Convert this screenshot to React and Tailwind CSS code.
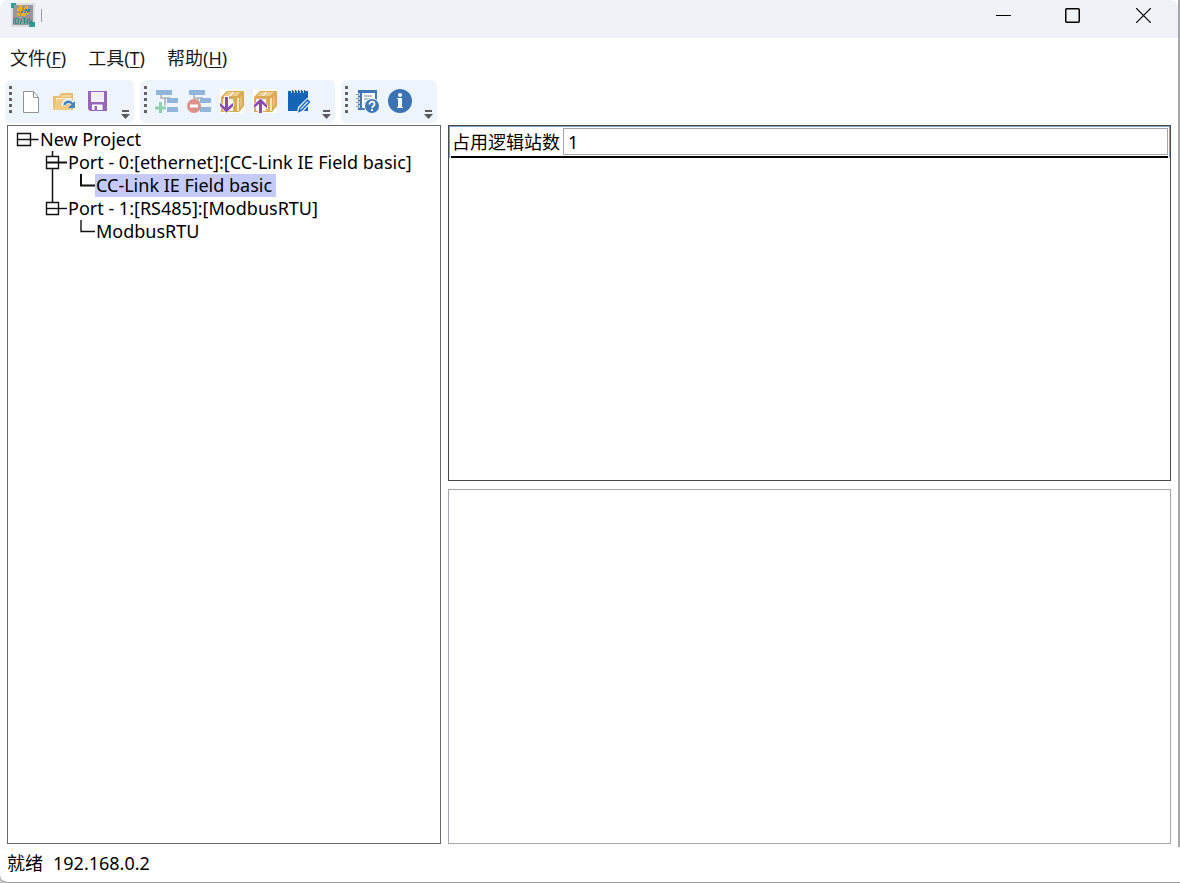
import { useState } from 'react'

const menus = [
  { label: '文件', hotkey: 'F' },
  { label: '工具', hotkey: 'T' },
  { label: '帮助', hotkey: 'H' },
]

const treeRows = [
  { id: 'root', type: 'root', label: 'New Project' },
  { id: 'port0', type: 'firstPort', label: 'Port - 0:[ethernet]:[CC-Link IE Field basic]' },
  { id: 'cclink', type: 'childWithTrunk', label: 'CC-Link IE Field basic' },
  { id: 'port1', type: 'lastPort', label: 'Port - 1:[RS485]:[ModbusRTU]' },
  { id: 'modbus', type: 'child', label: 'ModbusRTU' },
]

function AppLogo() {
  return (
    <svg width="24" height="24" viewBox="0 0 24 24" shapeRendering="crispEdges" aria-hidden="true">
      <path d="M0 0h24v24H0z" fill="#dcdfe1" />
      <path d="M2 2h20v20H2z" fill="#979899" />
      <path d="M0 0h5v2H3v3H0zM19 19h5v5h-6v-2h1z" fill="#2f9d91" />
      <path
        d="M8 2h3v3H8zM14 3h3v3h-3zM6 5h4v3H6zM9 5h6v3H9zM9 8h5v3H9zM6 10h3v3H6zM10 10h5v3h-5zM14 9h4v2h-4z"
        fill="#f5b01c"
      />
      <path d="M11 5h2v2h-2zM8 9h2v2H8z" fill="#e28a10" />
      <path d="M10 8h2v2h-2zM12 7h2v1h-2zM14 6h2v2h-2zM16 8h1v2h-1zM17 6h2v3h-2zM13 9h2v1h-2z" fill="#2583b5" />
      <path
        d="M2 15h1v6H2zM4 15h3v1H4zM4 15h1v6H4zM4 20h3v1H4zM7 16h1v4H7zM9 19h1v2H9zM10 16h1v3h-1zM12 15h3v1h-3zM13 16h1v5h-1zM16 16h1v5h-1zM15 18h2v1h-2zM18 15h1v6h-1zM18 20h4v1h-4zM20 17h1v3h-1z"
        fill="#16958a"
      />
    </svg>
  )
}

function NewIcon() {
  return (
    <svg width="24" height="24" viewBox="0 0 24 24" aria-hidden="true">
      <path d="M4.500 2.500h10l5 6v15h-15z" fill="#fff" stroke="#939393" />
      <path d="M14.500 2.500v6h5" fill="none" stroke="#939393" />
    </svg>
  )
}

function OpenIcon() {
  return (
    <svg width="24" height="24" viewBox="0 0 24 24" aria-hidden="true">
      <path d="M1 21V7h6l2-3h12v17z" fill="#eabf75" />
      <path d="M10 6h9v2H9z" fill="#f6d799" />
      <path d="M4 9h16v3H4z" fill="#fdf3dd" />
      <path d="M1 21 5 10h17l-3 11z" fill="#f1ca84" />
      <path d="M11.500 16.500c1-5 7-5.500 9-2" fill="none" stroke="#e9f1f6" strokeWidth="5" />
      <path d="M12.500 16c1-4 6-4.500 8-1" fill="none" stroke="#4585bd" strokeWidth="2.500" />
      <path d="M23 12v7h-7z" fill="#4585bd" />
    </svg>
  )
}

function SaveIcon() {
  return (
    <svg width="24" height="24" viewBox="0 0 24 24" aria-hidden="true">
      <path d="M3 2h19v20H5l-2-2z" fill="#9866b7" />
      <path d="M6 3h13v10H6z" fill="#f1eef6" />
      <path d="M7 15.500h10.500V21H7z" fill="#fff" />
      <path d="M9.500 17H12v4H9.500z" fill="#9866b7" />
    </svg>
  )
}

function NodeShapes() {
  return (
    <>
      <path d="M7 5v4h4v11h4M9 9h7" fill="none" stroke="#aaafb4" strokeWidth="1.500" />
      <path d="M2 1h16v5H2zM13 9h11v5H13zM13 18h11v5H13z" fill="#91b6da" />
    </>
  )
}

function AddNodeIcon() {
  return (
    <svg width="24" height="24" viewBox="0 0 24 24" aria-hidden="true">
      <NodeShapes />
      <path d="M6.500 13v12M0 19h13" stroke="#eef4fc" strokeWidth="5" />
      <path d="M6.500 13v11M1 19h11" stroke="#8fd0b1" strokeWidth="3" />
    </svg>
  )
}

function RemoveNodeIcon() {
  return (
    <svg width="24" height="24" viewBox="0 0 24 24" aria-hidden="true">
      <NodeShapes />
      <circle cx="7" cy="17" r="7" fill="#dc9289" />
      <path d="M3 17h8" stroke="#fff" strokeWidth="3" />
    </svg>
  )
}

function BoxIcon({ up }) {
  return (
    <svg width="24" height="24" viewBox="0 0 24 24" aria-hidden="true">
      <path d="M0 0h24v24H0z" fill="#fffdf8" />
      <path d="M1 8 7 2h17v15l-5 6H1z" fill="#d9ab55" />
      <path d="M4 7 8 3h5L9 7zM12 7l4-4h5l-4 4z" fill="#efcf90" />
      <path d="m9 7 4-4h2l-4 4z" fill="#fff" />
      <path d="M3 10h10v12H3z" fill="#fffaf0" />
      <path d="M18 9v13" stroke="#fff6e2" strokeWidth="1.500" />
      <path d="m20 9 2-2v9l-2 3z" fill="#e6c078" />
      {up ? (
        <>
          <path d="M7.500 24V12" stroke="#fff" strokeWidth="5" />
          <path d="m7.500 9 7 7v4l-7-6-7 6v-4z" fill="#8b4caf" stroke="#fff" strokeWidth=".8" />
          <path d="M7.500 24V12" stroke="#8b4caf" strokeWidth="3" />
        </>
      ) : (
        <>
          <path d="M6.500 7v12" stroke="#fff" strokeWidth="5" />
          <path d="m6.500 24-7-7v-4l7 6 7-6v4z" fill="#8b4caf" stroke="#fff" strokeWidth=".8" />
          <path d="M6.500 8v13" stroke="#8b4caf" strokeWidth="3" />
        </>
      )}
    </svg>
  )
}

function NotepadIcon() {
  return (
    <svg width="24" height="24" viewBox="0 0 24 24" aria-hidden="true">
      <path d="M2 2h20v20H2z" fill="#1464b8" />
      <path d="M5.500 1v3M8.500 1v3M11.500 1v3M14.500 1v3M17.500 1v3" stroke="#c9d8e8" />
      <path d="M6.500 1v2M9.500 1v2M12.500 1v2M15.500 1v2M18.500 1v2" stroke="#3d5871" />
      <path d="m11 24 1-6 9-9h3v6l-8 9z" fill="#eef4fc" />
      <path d="m13 22.500 1-3.500 7.500-8 2 2-7.500 8z" fill="#d6e8f8" stroke="#1464b8" strokeWidth="1.400" />
    </svg>
  )
}

function ManualIcon() {
  return (
    <svg width="24" height="24" viewBox="0 0 24 24" aria-hidden="true">
      <path d="M3 1h19v20H3z" fill="#3f78b4" />
      <path d="M7 4h13v15H7z" fill="#fff" />
      <path d="M9 7h8M9 10h8M9 14h3" stroke="#a8abae" strokeWidth="1.500" />
      <path d="M1 5.500h4M1 9.500h4M1 13.500h4M1 17.500h4" stroke="#f5f7f9" strokeWidth="2" />
      <path d="M1 5.500h3M1 9.500h3M1 13.500h3M1 17.500h3" stroke="#8b969f" />
      <circle cx="17" cy="17" r="8" fill="#eef4fc" />
      <circle cx="17" cy="17" r="7" fill="#3f78b4" />
      <path
        d="M14.500 15.500c0-4 5.500-3.500 5 0 0 1.500-2.500 1.500-2.500 3.500M17 20v2"
        fill="none"
        stroke="#fff"
        strokeWidth="1.800"
      />
    </svg>
  )
}

function InfoIcon() {
  return (
    <svg width="24" height="24" viewBox="0 0 24 24" aria-hidden="true">
      <circle cx="12" cy="12" r="12" fill="#3a74b2" />
      <circle cx="12" cy="6" r="2" fill="#fff" />
      <path d="M9 9h5v9h1v1H9v-1h1v-8H9z" fill="#fff" />
    </svg>
  )
}

function ToolbarGroup({ items }) {
  return (
    <div className="flex h-[43px] rounded-md bg-[#eef4fc]">
      <div className="w-[9px] pl-1 pt-1.5">
        <svg width="3" height="28" viewBox="0 0 3 28" aria-hidden="true">
          <path d="M1.500 0v28" stroke="#636363" strokeWidth="3" strokeDasharray="3 3" />
        </svg>
      </div>
      {items.map(({ name, icon }) => (
        <button key={name} aria-label={name} className="flex h-[41px] w-[33px] items-center justify-center hover:bg-[#dbe8f8]">
          {icon}
        </button>
      ))}
      <button aria-label="工具栏选项" className="flex w-[21px] items-end justify-end pb-1 pr-1">
        <svg width="9" height="9" viewBox="0 0 9 9" aria-hidden="true">
          <path d="M1 0h7v2H1zM0 4h9L4.500 9z" fill="#5b5b5b" />
        </svg>
      </button>
    </div>
  )
}

function Branch({ type }) {
  if (type === 'root') {
    return (
      <svg width="31" height="23" viewBox="0 0 31 23" className="shrink-0" aria-hidden="true">
        <path d="M9.500 5.500h13v12h-13zM9.500 11.500h21" fill="none" stroke="#111" strokeWidth="1.400" />
      </svg>
    )
  }
  if (type === 'firstPort' || type === 'lastPort') {
    return (
      <svg width="59" height="23" viewBox="0 0 59 23" className="shrink-0" aria-hidden="true">
        <path d={type === 'firstPort' ? 'M44.500 0v23' : 'M44.500 0v7'} stroke="#111" strokeWidth="1.500" />
        <path d="M38.500 5.500h12v12h-12z" fill="#fff" stroke="#111" strokeWidth="1.400" />
        <path d="M38 11.500h21" stroke="#111" strokeWidth={type === 'firstPort' ? 2 : 1.4} />
      </svg>
    )
  }
  return (
    <svg width="87" height="23" viewBox="0 0 87 23" className="shrink-0" aria-hidden="true">
      {type === 'childWithTrunk' && <path d="M44.500 0v23" stroke="#111" strokeWidth="1.500" />}
      <path
        d="M73 0v11.500h14"
        fill="none"
        stroke="#111"
        strokeWidth={type === 'childWithTrunk' ? 2 : 1.4}
      />
    </svg>
  )
}

function TitleBar() {
  return (
    <header className="flex h-[38px] shrink-0 justify-between rounded-t-lg bg-[#eff3f7]">
      <div className="flex items-start gap-1.5 pl-[11px] pt-[3px]">
        <AppLogo />
        <span className="mt-1.5 h-[13px] w-px bg-[#9b9fa3]" />
      </div>
      <div className="flex h-[30px]">
        <button aria-label="最小化" className="flex w-[69px] items-center justify-center">
          <svg width="15" height="15" viewBox="0 0 15 15" aria-hidden="true">
            <path d="M0 7.500h15" stroke="#000" />
          </svg>
        </button>
        <button aria-label="最大化" className="flex w-[69px] items-center justify-center">
          <svg width="15" height="15" viewBox="0 0 15 15" aria-hidden="true">
            <rect x=".75" y=".75" width="13.500" height="13.500" rx="1" fill="none" stroke="#000" strokeWidth="1.500" />
          </svg>
        </button>
        <button aria-label="关闭" className="flex w-[71px] items-center justify-end pr-[27px]">
          <svg width="15" height="15" viewBox="0 0 15 15" aria-hidden="true">
            <path d="m0 0 15 15M15 0 0 15" stroke="#000" strokeWidth="1.200" />
          </svg>
        </button>
      </div>
    </header>
  )
}

export default function App() {
  const [selected, setSelected] = useState('cclink')
  const [stations, setStations] = useState('1')

  return (
    <div className="flex h-screen flex-col bg-[#c4c4c4] font-['Noto_Sans','Noto_Sans_CJK_SC',sans-serif] text-[18px] text-black">
      <div className="flex min-h-0 flex-1 flex-col border-r-2 border-[#a5a5a5] bg-white pb-[3px]">
        <TitleBar />

        <nav className="flex h-[42px] shrink-0 items-center gap-[22px] pb-0.5 pl-[10px] text-[#1a1a1a]">
          {menus.map(menu => (
            <button key={menu.hotkey}>
              {menu.label}(<span className="underline underline-offset-2">{menu.hotkey}</span>)
            </button>
          ))}
        </nav>

        <div className="flex h-[45px] shrink-0 gap-1.5 pl-[5px]">
          <ToolbarGroup
            items={[
              { name: '新建', icon: <NewIcon /> },
              { name: '打开', icon: <OpenIcon /> },
              { name: '保存', icon: <SaveIcon /> },
            ]}
          />
          <ToolbarGroup
            items={[
              { name: '添加节点', icon: <AddNodeIcon /> },
              { name: '删除节点', icon: <RemoveNodeIcon /> },
              { name: '下载', icon: <BoxIcon /> },
              { name: '上传', icon: <BoxIcon up /> },
              { name: '编辑', icon: <NotepadIcon /> },
            ]}
          />
          <ToolbarGroup
            items={[
              { name: '手册', icon: <ManualIcon /> },
              { name: '关于', icon: <InfoIcon /> },
            ]}
          />
        </div>

        <main className="flex min-h-0 flex-1 gap-[7px] px-[7px]">
          <ul className="w-[434px] shrink-0 overflow-hidden border border-[#696969] pt-0.5">
            {treeRows.map(row => (
              <li key={row.id} className="flex h-[23px]">
                <Branch type={row.type} />
                <button
                  onClick={() => setSelected(row.id)}
                  className={`h-[23px] whitespace-nowrap pl-px pr-1 leading-[23px] ${selected === row.id ? 'bg-[#c4cafa]' : ''}`}
                >
                  {row.label}
                </button>
              </li>
            ))}
          </ul>

          <div className="flex min-w-0 flex-1 flex-col gap-2">
            <section className="flex-1 border border-[#4a4a4a]">
              <div className="border-x border-t border-[#7da0c8] px-px">
                <div className="flex h-[31px] items-center gap-[3px] border-b-2 border-black pl-px">
                  <label htmlFor="stations" className="whitespace-nowrap pt-0.5">占用逻辑站数</label>
                  <input
                    id="stations"
                    type="text"
                    value={stations}
                    onChange={(e) => setStations(e.target.value)}
                    className="h-[27px] min-w-0 flex-1 border border-[#a5a5ad] px-1 pt-0.5 outline-none"
                  />
                </div>
              </div>
            </section>
            <section className="flex-1 border border-[#a5a5ad]" />
          </div>
        </main>
      </div>

      <footer className="flex h-9 shrink-0 items-center gap-[10px] rounded-bl-lg border-b border-[#9c9c9c] bg-white pb-0.5 pl-[7px]">
        <span>就绪</span>
        <span>192.168.0.2</span>
      </footer>
    </div>
  )
}
